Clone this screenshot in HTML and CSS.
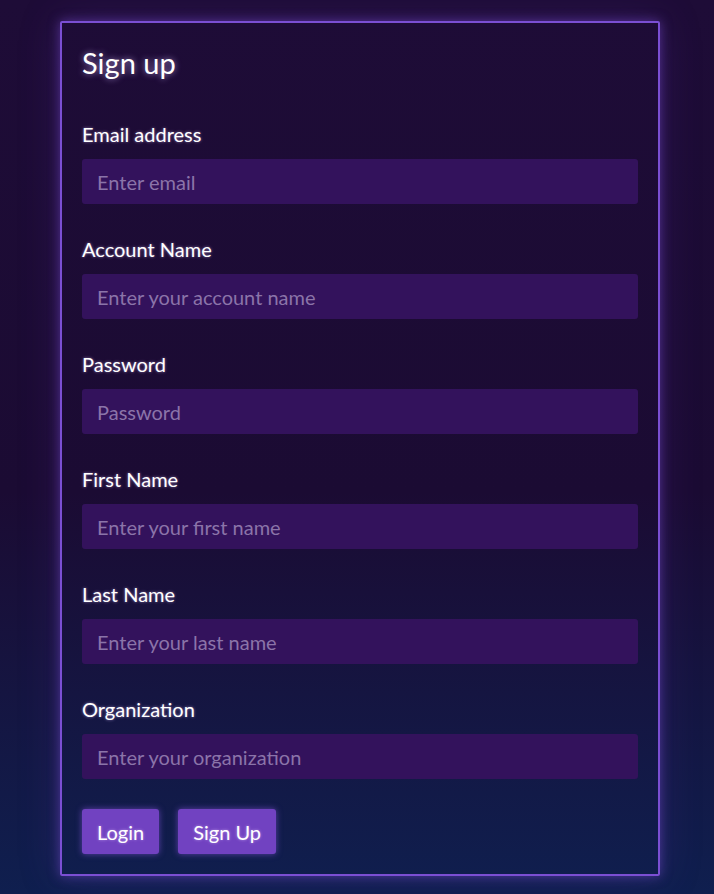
FILE: index.html
```html
<!DOCTYPE html>
<html>
<head>
<meta charset="utf-8">
<link rel="stylesheet" href="styles.css">
</head>
<body>
<div class="card">
  <h2 class="title">Sign up</h2>
  <form class="form">
    <div class="group">
      <label class="label">Email address</label>
      <input class="input" type="email" placeholder="Enter email">
    </div>
    <div class="group">
      <label class="label">Account Name</label>
      <input class="input" type="text" placeholder="Enter your account name">
    </div>
    <div class="group">
      <label class="label">Password</label>
      <input class="input" type="password" placeholder="Password">
    </div>
    <div class="group">
      <label class="label">First Name</label>
      <input class="input" type="text" placeholder="Enter your first name">
    </div>
    <div class="group">
      <label class="label">Last Name</label>
      <input class="input" type="text" placeholder="Enter your last name">
    </div>
    <div class="group group-last">
      <label class="label">Organization</label>
      <input class="input" type="text" placeholder="Enter your organization">
    </div>
    <div class="actions">
      <button class="btn" type="button">Login</button>
      <button class="btn" type="button">Sign Up</button>
    </div>
  </form>
</div>
</body>
</html>
```
FILE: styles.css
```css
html, body {
  margin: 0;
  padding: 0;
  min-height: 100%;
}
body {
  background: linear-gradient(180deg, #1e0c37 0%, #1b0b33 55%, #0f1f4f 100%);
  font-family: Lato, "Open Sans", sans-serif;
  color: #ffffff;
  height: 894px;
  overflow: hidden;
  padding-top: 21px;
  box-sizing: border-box;
}
.card {
  margin-left: 60px;
  width: 600px;
  box-sizing: border-box;
  border: 2px solid #7b4fd3;
  border-radius: 2px;
  padding: 20px 20px 20px 20px;
  box-shadow: 0 0 12px rgba(123, 79, 211, 0.55), 0 0 40px rgba(90, 50, 170, 0.25);
}
.title {
  margin: 0 0 38px 0;
  font-size: 29px;
  font-weight: 400;
  line-height: 40px;
  text-shadow: 0 0 6px rgba(210, 180, 255, 0.7);
}
.form {
  display: flex;
  flex-direction: column;
}
.group {
  display: flex;
  flex-direction: column;
  margin-bottom: 32px;
}
.group-last {
  margin-bottom: 30px;
}
.label {
  font-size: 20px;
  font-weight: 400;
  line-height: 27px;
  margin-bottom: 11px;
  text-shadow: 0 0 3px rgba(220, 190, 255, 0.6);
}
.input {
  height: 45px;
  box-sizing: border-box;
  background: #33125c;
  border: none;
  border-radius: 3px;
  padding: 0 15px;
  font-family: Lato, "Open Sans", sans-serif;
  font-size: 20px;
  color: #ffffff;
  outline: none;
}
.input::placeholder {
  color: #8b74a9;
}
.actions {
  display: flex;
  gap: 19px;
}
.btn {
  height: 45px;
  padding: 0 15px;
  background: #7142c1;
  border: none;
  border-radius: 3px;
  color: #ffffff;
  font-family: Lato, "Open Sans", sans-serif;
  font-size: 20px;
  font-weight: 400;
  box-shadow: 0 0 6px rgba(140, 90, 230, 0.6);
  text-shadow: 0 0 3px rgba(230, 200, 255, 0.6);
}
```
